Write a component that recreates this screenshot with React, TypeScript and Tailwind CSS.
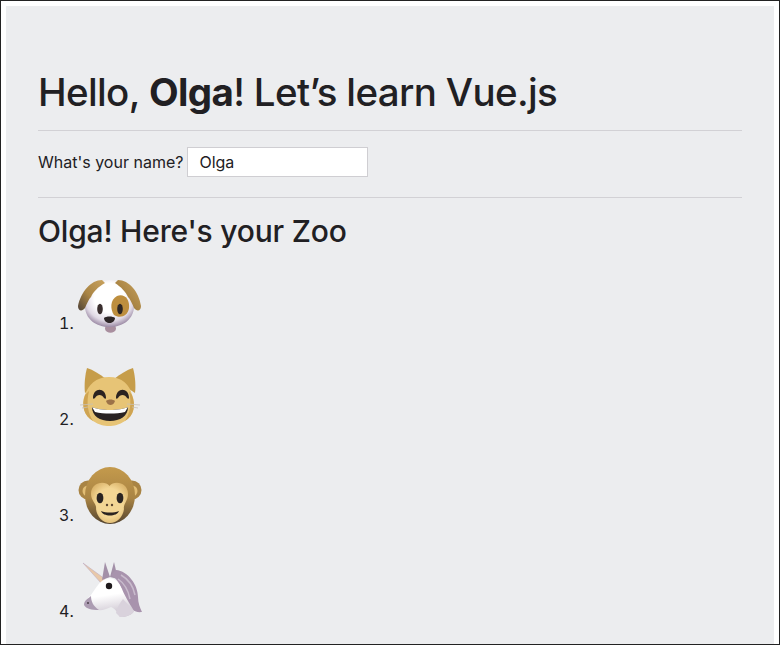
import React from "react";

const DogIcon = () => (
  <svg viewBox="0 0 64 72" className="inline-block h-[72px] w-16 align-[-8px]">
    <defs>
      <radialGradient id="dogHead" cx="0.5" cy="0.38" r="0.62">
        <stop offset="0.5" stopColor="#ffffff" />
        <stop offset="0.8" stopColor="#dfd8e4" />
        <stop offset="1" stopColor="#9d8ca6" />
      </radialGradient>
      <linearGradient id="dogEar" x1="0" y1="1" x2="1" y2="0">
        <stop offset="0" stopColor="#4f4237" />
        <stop offset="0.45" stopColor="#a98444" />
        <stop offset="1" stopColor="#c9a35e" />
      </linearGradient>
    </defs>
    <path d="M32 58 C29 58 27 61 27 64 C28 69 37 69 38 64 C38 61 36 58 32 58Z" fill="#a98f9f" />
    <path d="M31.5 15 C44 15 56 26 56 41 C56 54 45 62 31.5 62 C18 62 7 54 7 41 C7 26 19 15 31.5 15Z" fill="url(#dogHead)" />
    <path d="M24 15 C13 15 3 27 0 41 C0 46 4 47 7 43 C9 38 11 34 13 32 C15 27 20 22 27 18 Z" fill="url(#dogEar)" />
    <path d="M40 15 C51 15 61 27 63 41 C63 46 59 47 56 43 C54 38 52 34 50 32 C48 27 43 22 37 18 Z" fill="url(#dogEar)" />
    <path d="M39 31 C46 28 52 34 51 43 C50 51 42 54 36 50 C32 44 32 35 39 31Z" fill="#bd8e3e" />
    <ellipse cx="22" cy="44" rx="2.8" ry="5.2" fill="#3a2e2e" />
    <ellipse cx="42" cy="44" rx="2.8" ry="5.2" fill="#2e2623" />
    <path d="M26 53 C28 51 35 51 37 53 C37 56 34 58 31.5 58 C29 58 26 56 26 53Z" fill="#2c2526" />
  </svg>
);

const CatIcon = () => (
  <svg viewBox="0 0 64 72" className="inline-block h-[72px] w-16 align-[-8px]">
    <path d="M9 7 C7 14 6 24 7 32 L28 18 C22 13 15 9 9 7Z" fill="#c69d4a" />
    <path d="M55 7 C57 14 58 24 57 32 L36 18 C42 13 49 9 55 7Z" fill="#c69d4a" />
    <path d="M31 16 C44 16 52 24 54 34 C58 44 56 55 47 60 C41 64 36 65 31 65 C26 65 21 64 15 60 C6 55 3 44 7 34 C10 24 18 16 31 16Z" fill="#e7c476" />
    <path d="M7 34 C3 44 6 55 15 60 C10 52 8 42 11 30Z" fill="#cfa452" />
    <path d="M54 34 C58 44 56 55 47 60 C52 52 54 42 51 30Z" fill="#cfa452" />
    <path d="M15 37 C15 26 28 26 28 37 C28 38 27 38 26 37 C24 33 19 33 17 37 C16 38 15 38 15 37Z" fill="#2b2320" />
    <path d="M38 37 C38 26 51 26 51 37 C51 38 50 38 49 37 C47 33 42 33 40 37 C39 38 38 38 38 37Z" fill="#2b2320" />
    <path d="M28 40 C30 38 35 38 37 40 C36 43 34 44 32.5 44 C31 44 29 43 28 40Z" fill="#9c7248" />
    <path d="M14 46 C22 50 42 50 50 46 C50 55 42 60 32 60 C22 60 14 55 14 46Z" fill="#2a2322" />
    <path d="M14 46 C22 50 42 50 50 46 L47 51 C38 53 26 53 17 51Z" fill="#ffffff" />
    <path d="M2 44 L15 43 M4 47 L10 46 M62 44 L49 43 M60 47 L54 46" stroke="#c6c0b8" strokeWidth="0.8" />
  </svg>
);

const MonkeyIcon = () => (
  <svg viewBox="0 0 64 72" className="inline-block h-[72px] w-16 align-[-8px]">
    <defs>
      <linearGradient id="monkeyFur" x1="0" y1="0" x2="0" y2="1">
        <stop offset="0" stopColor="#c49a4c" />
        <stop offset="0.55" stopColor="#a98444" />
        <stop offset="1" stopColor="#54442f" />
      </linearGradient>
      <radialGradient id="monkeyFace" cx="0.5" cy="0.5" r="0.6">
        <stop offset="0.6" stopColor="#f3d694" />
        <stop offset="1" stopColor="#d8b066" />
      </radialGradient>
    </defs>
    <circle cx="10" cy="33" r="9.5" fill="#a98444" />
    <circle cx="10" cy="34" r="5.5" fill="#e2bd74" />
    <circle cx="54" cy="33" r="9.5" fill="#a98444" />
    <circle cx="54" cy="34" r="5.5" fill="#e2bd74" />
    <ellipse cx="32" cy="38.5" rx="25" ry="28.5" fill="url(#monkeyFur)" />
    <path d="M31.5 29 C36 23 50 25 50 37 C50 44 45 47 46 52 C45 60 39 66 32 66 C25 66 19 60 18 52 C19 47 13 44 13 37 C13 25 27 23 31.5 29Z" fill="url(#monkeyFace)" />
    <ellipse cx="22" cy="41" rx="3.4" ry="5.2" fill="#2a2422" />
    <ellipse cx="42" cy="41" rx="3.4" ry="5.2" fill="#2a2422" />
    <circle cx="29" cy="48" r="1.2" fill="#5c4630" />
    <circle cx="34" cy="48" r="1.2" fill="#5c4630" />
    <path d="M23 54 C28 56 36 56 41 54 C39 60 25 60 23 54Z" fill="#2a2320" />
  </svg>
);

const UnicornIcon = () => (
  <svg viewBox="0 0 64 72" className="inline-block h-[72px] w-16 align-[-8px]">
    <defs>
      <linearGradient id="uniFace" x1="0.3" y1="0" x2="0.5" y2="1">
        <stop offset="0.45" stopColor="#ffffff" />
        <stop offset="1" stopColor="#c8c0cc" />
      </linearGradient>
    </defs>
    <path d="M5 10 L27 26 L23 30 Z" fill="#e8c8a8" stroke="#b9a5bf" strokeWidth="0.5" />
    <path d="M27 9 L24 27 L32 24 Z" fill="#a390a8" />
    <path d="M36 9 L32 24 L40 26 Z" fill="#a390a8" />
    <path d="M38 17 C50 18 60 32 60 44 C60 50 62 55 64 59 C57 60 50 56 46 46 C44 34 40 26 33 22 Z" fill="#a893ad" />
    <path d="M43 22 C50 26 55 32 57 42 M40 26 C46 30 50 36 52 46" stroke="#c9bccd" strokeWidth="1.5" fill="none" />
    <path d="M24 28 C32 22 40 26 44 36 C48 46 54 54 56 58 C54 62 48 64 42 64 C39 58 36 55 33 54 C28 56 24 58 20 57 C14 57 8 56 6 52 C6 47 10 46 13 42 C17 36 20 31 24 28Z" fill="url(#uniFace)" />
    <path d="M38 60 C39 54 42 50 45 46 L56 58 C54 62 48 64 42 64Z" fill="#d9d2dc" />
    <path d="M6 52 C6 47 10 46 13 43 C13 48 15 53 21 57 C14 57 8 56 6 52Z" fill="#ac9cb2" />
    <circle cx="10" cy="50" r="1" fill="#4a3f48" />
    <circle cx="31" cy="33" r="3.2" fill="#1f1a1c" />
  </svg>
);

const zoo = [DogIcon, CatIcon, MonkeyIcon, UnicornIcon];

export default function App() {
  return (
    <div className="h-[645px] overflow-hidden border border-[#222] bg-white px-[5px] pt-[5px] font-['Inter',sans-serif] text-[#212023]">
      <div className="h-full bg-[#ecedef] px-8 pt-[62px]">
        <h1 className="text-[38.5px] leading-[48px] font-[450] tracking-[-0.65px]">
          Hello, <strong className="font-bold">Olga</strong>! Let’s learn Vue.js
        </h1>
        <hr className="mt-[14px] border-[#d2d1d5]" />
        <div className="mt-4 flex items-center">
          <label className="text-base leading-[30px]">What's your name?</label>
          <input
            defaultValue="Olga"
            className="ml-1 h-[30px] w-[181px] border border-[#cfced2] bg-white px-[11px] text-base outline-none"
          />
        </div>
        <hr className="mt-5 border-[#d2d1d5]" />
        <h2 className="mt-[14px] text-[30px] leading-[38px] font-[450] tracking-[-0.2px]">Olga! Here's your Zoo</h2>
        <ol className="mt-[15px] list-decimal pl-10 text-base">
          {zoo.map((Icon, i) => (
            <li key={i} className="h-24">
              <Icon />
            </li>
          ))}
        </ol>
      </div>
    </div>
  );
}
